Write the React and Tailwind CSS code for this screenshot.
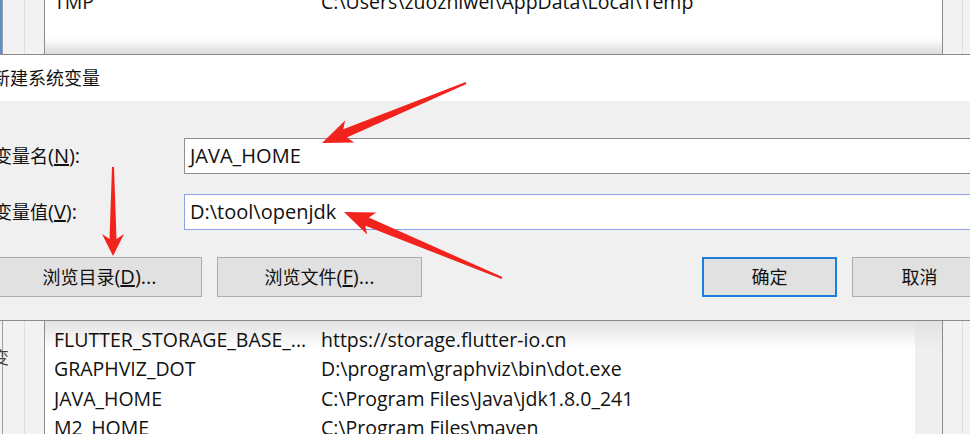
const FONT = { fontFamily: '"Open Sans", "Noto Sans CJK SC", sans-serif' }

// tapered red arrow, like the screenshot tool's annotation arrow
function arrowPoints(tx, ty, hx, hy, headLen, headW, neckW, tailW) {
  const len = Math.hypot(hx - tx, hy - ty)
  const dx = (hx - tx) / len
  const dy = (hy - ty) / len
  const nx = -dy
  const ny = dx
  const bx = hx - dx * headLen
  const by = hy - dy * headLen
  const kx = bx + dx * 5
  const ky = by + dy * 5
  const p = [
    [tx + nx * tailW, ty + ny * tailW],
    [kx + nx * neckW, ky + ny * neckW],
    [bx + nx * headW, by + ny * headW],
    [hx, hy],
    [bx - nx * headW, by - ny * headW],
    [kx - nx * neckW, ky - ny * neckW],
    [tx - nx * tailW, ty - ny * tailW],
  ]
  return p.map(([x, y]) => `${x.toFixed(1)},${y.toFixed(1)}`).join(' ')
}

function SideStrip({ blue }) {
  return (
    <div className="flex h-full w-[45px] shrink-0 border-r border-[#8c8c8c] bg-[#f2f2f2]">
      <div className={`h-full w-[3px] border-r border-[#a0a0a0] ${blue ? 'bg-[#5b8fd0]' : 'bg-[#f2f2f2]'}`} />
      <div className="h-full w-[22px] border-r border-[#dedede]" />
      <div className="h-full flex-1" />
    </div>
  )
}

function RightStrip() {
  return (
    <div className="flex h-full w-[28px] shrink-0 border-l border-[#8c8c8c] bg-[#f2f2f2]">
      <div className="h-full w-[20px] border-r border-[#dedede]" />
    </div>
  )
}

function Row({ name, value }) {
  return (
    <div className="flex h-[29.4px] items-center whitespace-nowrap text-[19.5px] text-[#111]">
      <span className="w-[276px] shrink-0 pl-[9px]">{name}</span>
      <span>{value}</span>
    </div>
  )
}

// latin part of a mixed label, sized up so it matches the YaHei look
function L({ children }) {
  return <span className="text-[20px]">{children}</span>
}

function Btn({ children, primary, className = '' }) {
  return (
    <div
      className={`flex h-[40px] shrink-0 items-center justify-center bg-[#e1e1e1] text-[18px] text-[#111] ${
        primary ? 'border-2 border-[#1c7ddb]' : 'border border-[#adadad]'
      } ${className}`}
    >
      {children}
    </div>
  )
}

export default function App() {
  const rows = [
    ['FLUTTER_STORAGE_BASE_...', 'https://storage.flutter-io.cn'],
    ['GRAPHVIZ_DOT', 'D:\\program\\graphviz\\bin\\dot.exe'],
    ['JAVA_HOME', 'C:\\Program Files\\Java\\jdk1.8.0_241'],
    ['M2_HOME', 'C:\\Program Files\\maven'],
  ]

  return (
    <div className="relative h-[434px] w-[970px] overflow-hidden bg-white" style={FONT}>
      {/* background window, top part */}
      <div className="flex h-[54px]">
        <SideStrip blue />
        <div className="h-full flex-1 overflow-hidden bg-linear-to-b from-white from-70% to-[#dcdcdc]">
          <div className="mt-[-13px]">
            <Row name="TMP" value="C:\Users\zuozhiwei\AppData\Local\Temp" />
          </div>
        </div>
        <RightStrip />
      </div>

      {/* dialog */}
      <div className="flex h-[267px] flex-col overflow-hidden border-y border-[#8a8a8a] bg-[#f0f0f0]">
        <div className="flex h-[46px] shrink-0 items-center bg-white text-[18px] text-[#111]">
          <span className="ml-[-8px]">新建系统变量</span>
        </div>

        <div className="flex flex-col pt-[37px]">
          <div className="flex h-[36px] items-center">
            <span className="ml-[-6px] w-[190px] shrink-0 text-[18px] text-[#111]">
              变量名<L>(<u>N</u>):</L>
            </span>
            <div className="mr-[-20px] flex h-full flex-1 items-center border border-[#8f8f8f] bg-white pl-[5px] text-[20px] text-[#111]">
              JAVA_HOME
            </div>
          </div>

          <div className="mt-[20px] flex h-[36px] items-center">
            <span className="ml-[-6px] w-[190px] shrink-0 text-[18px] text-[#111]">
              变量值<L>(<u>V</u>):</L>
            </span>
            <div className="mr-[-20px] flex h-full flex-1 items-center border border-[#8ea0e6] bg-white pl-[5px] text-[20px] text-[#111]">
              D:\tool\openjdk
            </div>
          </div>

          <div className="mt-[27px] flex items-center">
            <Btn className="ml-[-3px] w-[205px]">
              浏览目录<L>(<u>D</u>)...</L>
            </Btn>
            <Btn className="ml-[15px] w-[205px]">
              浏览文件<L>(<u>F</u>)...</L>
            </Btn>
            <Btn primary className="ml-auto w-[135px]">
              确定
            </Btn>
            <Btn className="ml-[15px] mr-[-17px] w-[135px]">取消</Btn>
          </div>
        </div>
      </div>

      {/* background window, bottom part */}
      <div className="flex h-[113px]">
        <div className="relative">
          <SideStrip />
          <span className="absolute left-[-8px] top-[24px] text-[17px] text-[#444]">变</span>
        </div>
        <div className="h-full flex-1 overflow-hidden bg-linear-to-b from-[#e2e2e2] to-white to-25% pt-[4px]">
          {rows.map(([n, v]) => (
            <Row key={n} name={n} value={v} />
          ))}
        </div>
        <div className="h-full w-[27px] bg-linear-to-b from-[#e2e2e2] to-[#efefef] to-25%" />
        <RightStrip />
      </div>

      {/* red annotation arrows */}
      <svg className="pointer-events-none absolute inset-0" width="970" height="434">
        <polygon points={arrowPoints(466, 83, 322, 143, 30, 12, 4.5, 1)} fill="#f2231d" />
        <polygon points={arrowPoints(113, 167, 113, 256, 22, 11, 3.5, 1)} fill="#f2231d" />
        <polygon points={arrowPoints(502, 278, 344, 212, 30, 12, 4.5, 1)} fill="#f2231d" />
      </svg>
    </div>
  )
}
